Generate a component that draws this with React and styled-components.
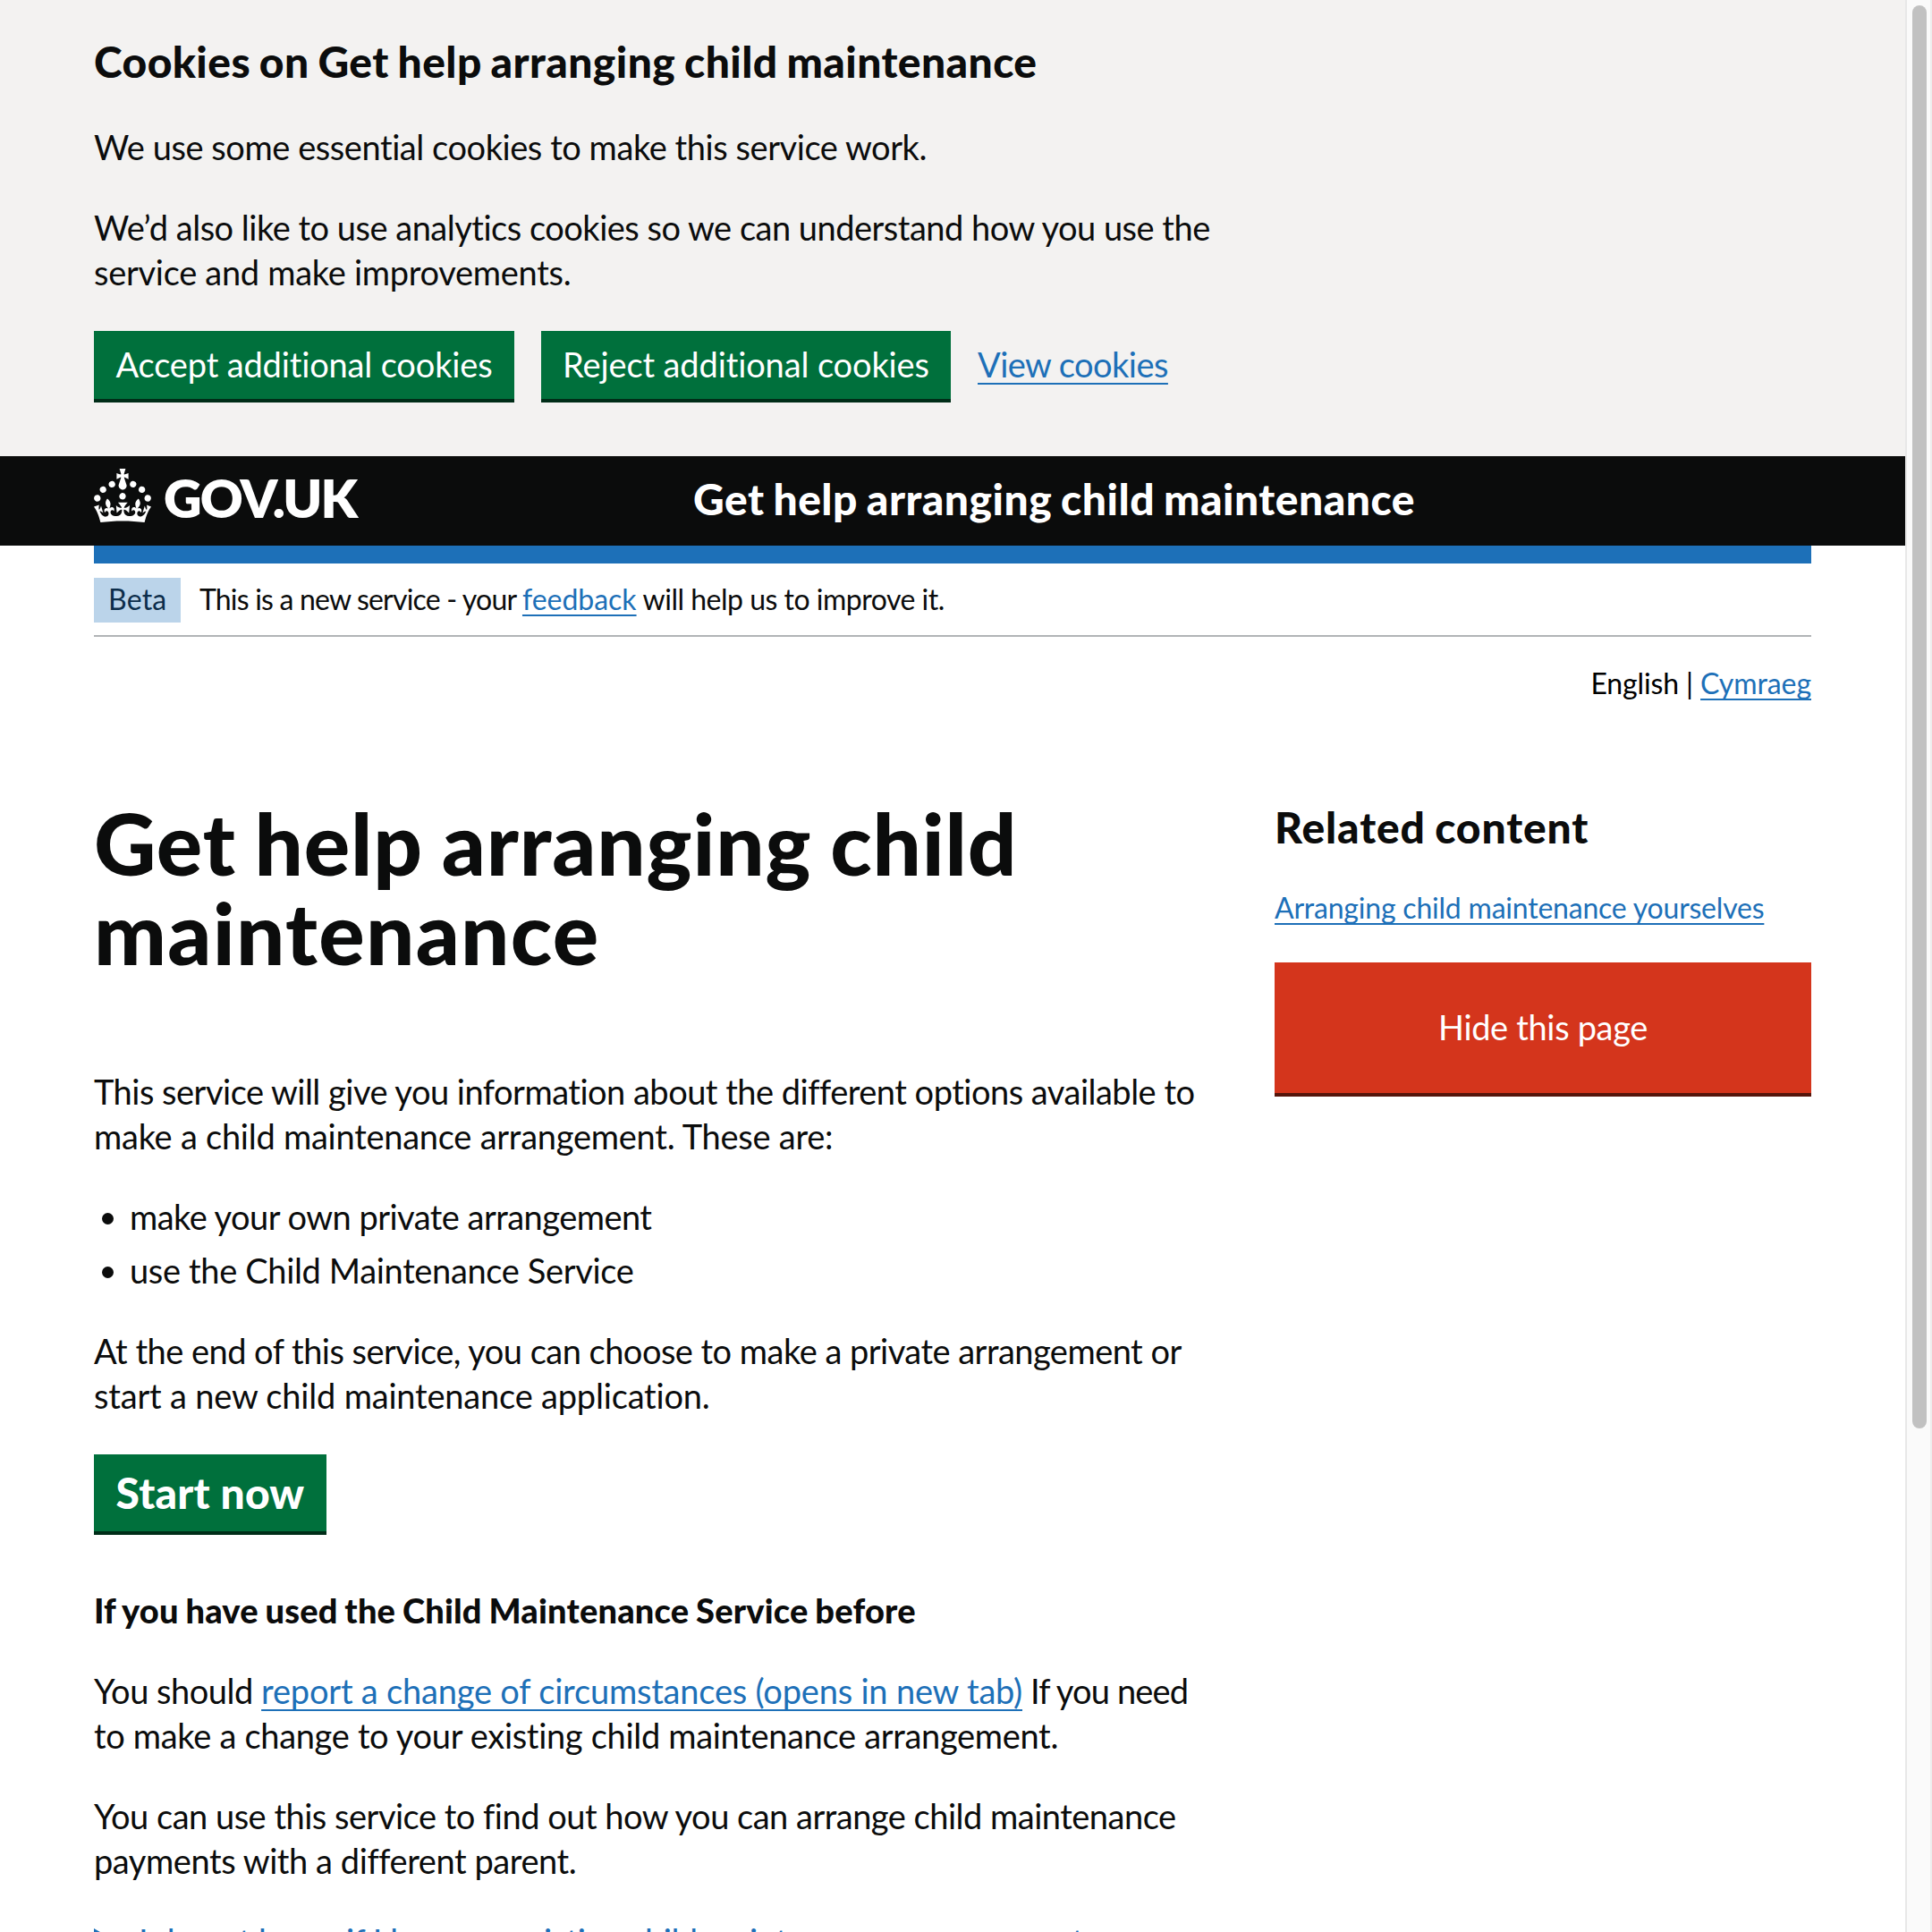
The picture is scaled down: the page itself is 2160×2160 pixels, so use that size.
import React from 'react';
import styled, { createGlobalStyle, css } from 'styled-components';

const color = {
  text: '#0b0c0c',
  link: '#1d70b8',
  green: '#00703c',
  greenShadow: '#002d18',
  red: '#d4351c',
  redShadow: '#55150b',
  panel: '#f3f2f1',
  border: '#b1b4b6',
  tagFill: '#bbd4ea',
  tagText: '#0c2d4a',
};

const GlobalStyle = createGlobalStyle`
  *, *::before, *::after { box-sizing: border-box; }
  html, body { margin: 0; padding: 0; }
  body {
    height: 2160px;
    overflow: hidden;
    background: #fff;
    color: ${color.text};
    font-family: Lato, "Noto Sans", Arial, sans-serif;
    font-variant-ligatures: none;
    -webkit-font-smoothing: antialiased;
  }
`;

const Viewport = styled.div`
  display: flex;
  width: 2160px;
  height: 2160px;
  overflow: hidden;
`;

const Page = styled.div`
  width: 2130px;
  height: 2160px;
  overflow: hidden;
  flex: none;
`;

const ScrollTrack = styled.div`
  flex: 1;
  padding: 6px 4px 0 6px;
  background: #fafafa;
  border-left: 2px solid #e8e8e8;
  border-right: 2px solid #ededed;
`;

const ScrollThumb = styled.div`
  width: 16px;
  height: 1591px;
  border-radius: 8px;
  background: #c1c1c1;
`;

const Container = styled.div`
  width: 1920px;
  margin: 0 105px;
`;

const textBlock = css`
  margin: -0.026em 0 calc(${(p) => p.$gap ?? 40}px + 0.026em);
  font-weight: 400;
`;

const HeadingXL = styled.h1`
  margin: -4px 0 104px;
  font-size: 96px;
  font-weight: 900;
  line-height: 100px;
  word-spacing: -3px;
`;

const HeadingM = styled.h2`
  ${textBlock}
  font-size: 48px;
  line-height: 60px;
  word-spacing: -2px;
  && { font-weight: 900; }
`;

const HeadingS = styled.h3`
  ${textBlock}
  font-size: 38px;
  line-height: 50px;
  word-spacing: -1.5px;
  && { font-weight: 900; }
`;

const Paragraph = styled.p`
  ${textBlock}
  font-size: 38px;
  line-height: 50px;
`;

const SmallParagraph = styled.p`
  ${textBlock}
  font-size: 32px;
  line-height: 40px;
`;

const Line = styled.span`
  display: block;
  white-space: pre;
  letter-spacing: ${(p) => p.$track ?? 0}px;
`;

const Run = styled.span`
  white-space: pre;
  letter-spacing: ${(p) => p.$track ?? 0}px;
`;

const Link = styled.a`
  color: ${color.link};
  letter-spacing: ${(p) => p.$track ?? 0}px;
  text-decoration: underline;
  text-decoration-thickness: 2px;
  text-decoration-skip-ink: none;
  text-underline-offset: 0.1578em;
`;

const Button = styled.button`
  display: flex;
  align-items: center;
  justify-content: center;
  width: ${(p) => p.$width}px;
  height: ${(p) => p.$height}px;
  margin: 0;
  padding: 0 0 ${(p) => p.$lift ?? 0}px;
  border: 0;
  background: ${(p) => (p.$warning ? color.red : color.green)};
  box-shadow: 0 4px 0 ${(p) => (p.$warning ? color.redShadow : color.greenShadow)};
  color: #fff;
  font-family: inherit;
  font-size: ${(p) => (p.$start ? 48 : 38)}px;
  font-weight: ${(p) => (p.$start ? 900 : 400)};
  line-height: 1.2;
  letter-spacing: ${(p) => p.$track ?? 0}px;
  white-space: nowrap;
`;

const CookieBanner = styled.section`
  height: 510px;
  padding-top: 40px;
  background: ${color.panel};
  overflow: hidden;
`;

const ButtonGroup = styled.div`
  display: flex;
  gap: 30px;
  font-size: 38px;
  line-height: 50px;
`;

const GroupLink = styled.div`
  padding-top: 12px;
`;

const Header = styled.header`
  display: flex;
  height: 100px;
  padding-left: 105px;
  background: ${color.text};
  color: #fff;
`;

const Logo = styled.div`
  display: flex;
  gap: 14px;
  width: 670px;
  padding-top: 14px;
`;

const Wordmark = styled.span`
  padding-top: 2px;
  font-size: 59px;
  font-weight: 800;
  line-height: 62px;
  letter-spacing: -1.8px;
`;

const ServiceName = styled.div`
  padding-top: 18px;
  font-size: 48px;
  font-weight: 900;
  line-height: 60px;
  letter-spacing: 0.49px;
  word-spacing: -2px;
  white-space: nowrap;
`;

const BlueBar = styled.div`
  height: 20px;
  background: ${color.link};
`;

const PhaseBanner = styled.div`
  display: flex;
  gap: 21px;
  height: 82px;
  padding-top: 16px;
  border-bottom: 2px solid ${color.border};
  font-size: 32px;
  line-height: 40px;
`;

const Tag = styled.strong`
  width: 97px;
  height: 50px;
  padding: 4px 0 0 16px;
  background: ${color.tagFill};
  color: ${color.tagText};
  font-weight: 400;
  letter-spacing: 0.2px;
`;

const PhaseText = styled.div`
  padding-top: 4px;
  white-space: pre;
`;

const LanguageBar = styled.nav`
  height: 184px;
  padding-top: 32px;
  color: #000;
  font-size: 32px;
  line-height: 40px;
  text-align: right;
`;

const Columns = styled.div`
  display: grid;
  grid-template-columns: 1fr 600px;
  gap: 30px;
`;

const BulletList = styled.ul`
  display: flex;
  flex-direction: column;
  gap: 10px;
  margin: 0 0 40px;
  padding: 0;
  list-style: none;
`;

const Bullet = styled.li`
  display: flex;
  align-items: center;
  gap: 18px;
  height: 50px;
  padding-left: 9px;
  font-size: 38px;
  line-height: 46px;

  &::before {
    content: '';
    width: 13px;
    height: 13px;
    margin-top: 2px;
    border-radius: 50%;
    background: ${color.text};
  }
`;

const BulletText = styled.span`
  padding-bottom: 2px;
  white-space: pre;
  letter-spacing: ${(p) => p.$track}px;
`;

const StartRow = styled.div`
  margin-bottom: 64px;
`;

const Summary = styled.div`
  display: flex;
  gap: 26px;
  color: ${color.link};
  font-size: 38px;
  line-height: 50px;

  &::before {
    content: '';
    width: 24px;
    height: 28px;
    margin-top: 10px;
    background: ${color.link};
    clip-path: polygon(0 0, 100% 50%, 0 100%);
  }
`;

const SummaryText = styled.span`
  margin-top: -1px;
  white-space: pre;
  letter-spacing: -0.52px;
  text-decoration: underline;
  text-decoration-thickness: 2px;
  text-underline-offset: 0.1578em;
`;

function Crown() {
  return (
    <svg width="64" height="60" viewBox="0 0 32 30" aria-hidden="true">
      <path
        fill="currentColor"
        fillRule="evenodd"
        d="M22.6 10.4c-1 .4-2-.1-2.4-1-.4-.9.1-2 1-2.4.9-.4 2 .1 2.4 1s-.1 2-1 2.4m-5.9 6.7c-.9.4-2-.1-2.4-1-.4-.9.1-2 1-2.4.9-.4 2 .1 2.4 1s-.1 2-1 2.4m10.8-3.7c-1 .4-2-.1-2.4-1-.4-.9.1-2 1-2.4.9-.4 2 .1 2.4 1s0 2-1 2.4m3.3 4.8c-1 .4-2-.1-2.4-1-.4-.9.1-2 1-2.4.9-.4 2 .1 2.4 1s-.1 2-1 2.4M17 4.7l2.3 1.2V2.5l-2.3.7-.2-.2.9-3h-3.4l.9 3-.2.2c-.1.1-2.3-.7-2.3-.7v3.4L15 4.7c.1.1.1.2.2.2l-1.3 4c-.1.2-.1.4-.1.6 0 1.1.8 2 1.9 2.2h.7c1-.2 1.9-1.1 1.9-2.1 0-.2 0-.4-.1-.6l-1.3-4c-.1-.2 0-.2.1-.3m-7.6 5.7c.9.4 2-.1 2.4-1 .4-.9-.1-2-1-2.4-.9-.4-2 .1-2.4 1s0 2 1 2.4m-5 3c.9.4 2-.1 2.4-1 .4-.9-.1-2-1-2.4-.9-.4-2 .1-2.4 1s.1 2 1 2.4m-3.2 4.8c.9.4 2-.1 2.4-1 .4-.9-.1-2-1-2.4-.9-.4-2 .1-2.4 1s0 2 1 2.4m14.8 11c4.4 0 8.6.3 12.3.8 1.1-4.5 2.4-7 3.7-8.8l-2.5-.9c.2 1.3.3 1.9 0 2.7-.4-.4-.8-1.1-1.1-2.3l-1.2 4c.7-.5 1.3-.8 2-.9-1.1 2.5-2.6 3.1-3.5 3-1.1-.2-1.7-1.2-1.5-2.1.3-1.2 1.5-1.5 2.1-.1 1.1-2.3-.8-3-2-2.3 1.9-1.9 2.1-3.5.6-5.6-2.1 1.6-2.1 3.2-1.2 5.5-1.2-1.4-3.2-.6-2.5 1.6.9-1.4 2.1-.5 1.9.8-.2 1.1-1.7 2.1-3.5 1.9-2.7-.2-2.9-2.1-2.9-3.6.7-.1 1.9.5 2.9 1.9l.4-4.3c-1.1 1.1-2.1 1.4-3.2 1.4.4-1.2 2.1-3 2.1-3h-5.4s1.7 1.9 2.1 3c-1.1 0-2.1-.2-3.2-1.4l.4 4.3c1-1.4 2.2-2 2.9-1.9-.1 1.5-.2 3.4-2.9 3.6-1.9.2-3.4-.8-3.5-1.9-.2-1.3 1-2.2 1.9-.8.7-2.3-1.2-3-2.5-1.6.9-2.2.9-3.9-1.2-5.5-1.5 2-1.3 3.7.6 5.6-1.2-.7-3.1 0-2 2.3.6-1.4 1.8-1.1 2.1.1.2.9-.3 1.9-1.5 2.1-.9.2-2.4-.5-3.5-3 .6 0 1.2.3 2 .9l-1.2-4c-.3 1.1-.7 1.9-1.1 2.3-.3-.8-.2-1.4 0-2.7l-2.9.9C1.3 23 2.6 25.5 3.7 30c3.7-.5 7.9-.8 12.3-.8"
      />
    </svg>
  );
}

export default function App() {
  return (
    <Viewport>
      <GlobalStyle />
      <Page>
        <CookieBanner>
          <Container>
            <HeadingM>
              <Line $track={0.41}>Cookies on Get help arranging child maintenance</Line>
            </HeadingM>
            <Paragraph>
              <Line $track={-0.44}>We use some essential cookies to make this service work.</Line>
            </Paragraph>
            <Paragraph>
              <Line $track={-0.495}>We’d also like to use analytics cookies so we can understand how you use the</Line>
              <Line $track={-0.29}>service and make improvements.</Line>
            </Paragraph>
            <ButtonGroup>
              <Button $width={470} $height={76} $track={-0.15}>Accept additional cookies</Button>
              <Button $width={458} $height={76} $track={-0.12}>Reject additional cookies</Button>
              <GroupLink>
                <Link $track={-0.54}>View cookies</Link>
              </GroupLink>
            </ButtonGroup>
          </Container>
        </CookieBanner>

        <Header>
          <Logo>
            <Crown />
            <Wordmark>GOV.UK</Wordmark>
          </Logo>
          <ServiceName>Get help arranging child maintenance</ServiceName>
        </Header>

        <Container>
          <BlueBar />
          <PhaseBanner>
            <Tag>Beta</Tag>
            <PhaseText>
              <Run $track={-0.81}>This is a new service - your </Run>
              <Link $track={-0.02}>feedback</Link>
              <Run $track={-0.5}> will help us to improve it.</Run>
            </PhaseText>
          </PhaseBanner>

          <LanguageBar>
            <Run $track={-0.12}>English | </Run>
            <Link $track={-0.08}>Cymraeg</Link>
          </LanguageBar>

          <Columns>
            <main>
              <HeadingXL>
                <Line $track={0.87}>Get help arranging child</Line>
                <Line $track={1.3}>maintenance</Line>
              </HeadingXL>
              <Paragraph>
                <Line $track={-0.505}>This service will give you information about the different options available to</Line>
                <Line $track={-0.25}>make a child maintenance arrangement. These are:</Line>
              </Paragraph>
              <BulletList>
                <Bullet><BulletText $track={-0.53}>make your own private arrangement</BulletText></Bullet>
                <Bullet><BulletText $track={-0.348}>use the Child Maintenance Service</BulletText></Bullet>
              </BulletList>
              <Paragraph>
                <Line $track={-0.52}>At the end of this service, you can choose to make a private arrangement or</Line>
                <Line $track={-0.19}>start a new child maintenance application.</Line>
              </Paragraph>
              <StartRow>
                <Button $width={260} $height={86} $track={0.2} $start $lift={1}>Start now</Button>
              </StartRow>
              <HeadingS>
                <Line $track={0.195}>If you have used the Child Maintenance Service before</Line>
              </HeadingS>
              <Paragraph>
                <Line>
                  <Run $track={-0.48}>You should </Run>
                  <Link $track={-0.2}>report a change of circumstances (opens in new tab)</Link>
                  <Run $track={-0.84}> If you need</Run>
                </Line>
                <Line $track={-0.315}>to make a change to your existing child maintenance arrangement.</Line>
              </Paragraph>
              <Paragraph>
                <Line $track={-0.5}>You can use this service to find out how you can arrange child maintenance</Line>
                <Line $track={-0.43}>payments with a different parent.</Line>
              </Paragraph>
              <Summary>
                <SummaryText>I do not know if I have an existing child maintenance arrangement</SummaryText>
              </Summary>
            </main>

            <aside>
              <HeadingM>
                <Line $track={0.88}>Related content</Line>
              </HeadingM>
              <SmallParagraph>
                <Link $track={-0.21}>Arranging child maintenance yourselves</Link>
              </SmallParagraph>
              <Button $warning $width={600} $height={146} $track={-0.34} $lift={1}>Hide this page</Button>
            </aside>
          </Columns>
        </Container>
      </Page>
      <ScrollTrack>
        <ScrollThumb />
      </ScrollTrack>
    </Viewport>
  );
}
